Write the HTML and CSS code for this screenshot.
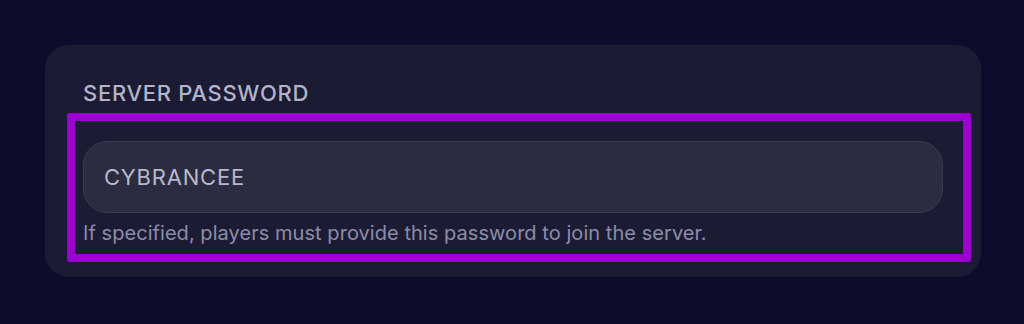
FILE: index.html
```html
<!DOCTYPE html>
<html>
<head>
<meta charset="utf-8">
<link rel="stylesheet" href="styles.css">
</head>
<body>
  <div class="card">
    <div class="label">SERVER PASSWORD</div>
    <div class="group">
      <div class="highlight"></div>
      <div class="input">CYBRANCEE</div>
      <div class="help">If specified, players must provide this password to join the server.</div>
    </div>
  </div>
</body>
</html>
```
FILE: styles.css
```css
html, body {
  margin: 0;
  padding: 0;
  background: #0c0d2a;
  width: 1024px;
  height: 324px;
  overflow: hidden;
  font-family: Inter, "Noto Sans", sans-serif;
}
.card {
  margin: 45px 0 0 45px;
  width: 936px;
  height: 232px;
  box-sizing: border-box;
  padding: 37px 38px 0 38px;
  background: #1b1c34;
  border-radius: 24px;
}
.label {
  font-size: 22px;
  line-height: 22px;
  font-weight: 500;
  color: #b3b3c9;
  letter-spacing: 0.7px;
}
.group {
  position: relative;
  margin-top: 37px;
}
.highlight {
  position: absolute;
  left: -16px;
  right: -28px;
  top: -28px;
  height: 149px;
  box-sizing: border-box;
  border: 8px solid #9a00d0;
  border-radius: 2px;
}
.input {
  height: 72px;
  box-sizing: border-box;
  border: 1px solid #3a3b52;
  border-radius: 24px;
  background: #2b2c40;
  padding-left: 20px;
  display: flex;
  align-items: center;
  font-size: 22px;
  font-weight: 400;
  color: #b8b8cc;
  letter-spacing: 0.8px;
}
.help {
  margin-top: 10px;
  font-size: 20px;
  line-height: 20px;
  color: #8c8ca8;
  letter-spacing: 0.05px;
}
```
